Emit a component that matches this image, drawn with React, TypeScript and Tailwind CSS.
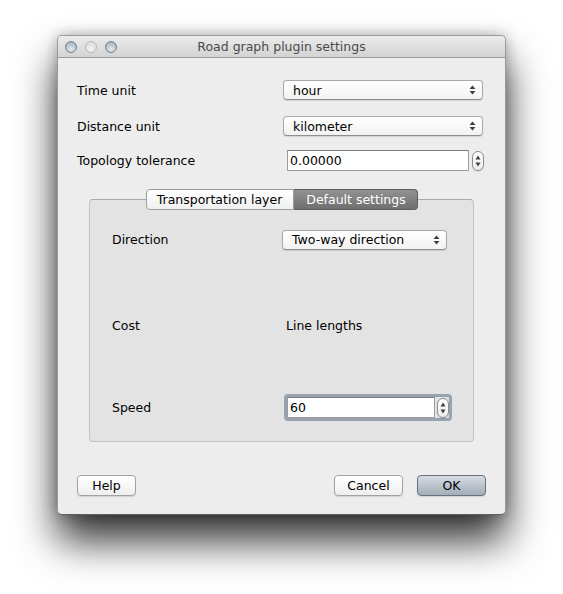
import type { ReactNode } from "react";

const FONT = { fontFamily: '"DejaVu Sans", "Liberation Sans", sans-serif' };

function Arrows() {
  return (
    <svg width="7" height="10" viewBox="0 0 7 10" className="shrink-0">
      <path d="M3.5 0.5 L6.5 4 H0.5 Z" fill="#404040" />
      <path d="M3.5 9.5 L6.5 6 H0.5 Z" fill="#404040" />
    </svg>
  );
}

function Select({ value, width }: { value: string; width: string }) {
  return (
    <div
      className={`${width} h-[20px] flex items-center justify-between pl-[9px] pr-[6px] rounded-[4px] border border-[#a9a9a9] border-b-[#8f8f8f] bg-gradient-to-b from-white to-[#f2f2f2] shadow-[0_1px_1px_rgba(0,0,0,0.12)] text-[12.5px] text-black`}
    >
      <span className="pt-[2px]">{value}</span>
      <Arrows />
    </div>
  );
}

function Spinner() {
  return (
    <div className="w-[12px] h-[20px] rounded-[6px] border border-[#8d8d8d] bg-gradient-to-b from-white to-[#ececec] flex flex-col items-center justify-between py-[3px] shadow-[0_1px_1px_rgba(0,0,0,0.1)]">
      <svg width="6" height="5" viewBox="0 0 6 5">
        <path d="M3 0.5 L5.5 4.5 H0.5 Z" fill="#404040" />
      </svg>
      <svg width="6" height="5" viewBox="0 0 6 5">
        <path d="M3 4.5 L5.5 0.5 H0.5 Z" fill="#404040" />
      </svg>
    </div>
  );
}

function Row({ label, labelW, h, children }: { label: string; labelW: string; h: string; children: ReactNode }) {
  return (
    <div className={`flex items-center ${h}`}>
      <div className={`${labelW} shrink-0 pt-[2px] text-[12.5px] text-black`}>{label}</div>
      {children}
    </div>
  );
}

function Light({ light }: { light?: boolean }) {
  return (
    <div
      className={`w-[12px] h-[12px] rounded-full border ${
        light
          ? "border-[#b4b8bc] bg-[radial-gradient(circle_at_50%_75%,#f4f4f4,#d4d6d8)]"
          : "border-[#77838f] bg-[radial-gradient(circle_at_50%_75%,#e6ecf1,#98a4b0)]"
      }`}
    />
  );
}

function Button({ label, width, primary }: { label: string; width: string; primary?: boolean }) {
  return (
    <div
      className={`${width} h-[21px] flex items-center justify-center rounded-[4px] border text-[12.5px] text-black shadow-[0_1px_1px_rgba(0,0,0,0.12)] ${
        primary
          ? "border-[#6a737d] bg-gradient-to-b from-[#d6dce3] to-[#a3adb8]"
          : "border-[#a2a2a2] bg-gradient-to-b from-white to-[#efefef]"
      }`}
    >
      <span className="pt-[2px]">{label}</span>
    </div>
  );
}

export default function App() {
  return (
    <div className="w-[563px] min-h-[594px] bg-white pt-[35px] pl-[57px]" style={FONT}>
      <div className="w-[449px] h-[480px] flex flex-col rounded-[5px] border border-[#9a9a9a] border-b-[#5f5f5f] bg-[#ededed] shadow-[0_0_14px_rgba(0,0,0,0.28),0_26px_40px_rgba(0,0,0,0.8)] overflow-hidden">
        {/* title bar */}
        <div className="h-[22px] shrink-0 grid grid-cols-[1fr_auto_1fr] items-center border-b border-[#9b9b9b] bg-gradient-to-b from-[#ececec] to-[#d3d3d3]">
          <div className="flex gap-[8px] pl-[7px]">
            <Light />
            <Light light />
            <Light />
          </div>
          <div className="pt-[1px] text-[12.5px] text-[#4a4a4a]">Road graph plugin settings</div>
          <div />
        </div>

        <div className="flex flex-col pl-[19px] pr-[19px] pt-[22px]">
          <Row label="Time unit" labelW="w-[206px]" h="h-[20px]">
            <Select value="hour" width="w-[200px]" />
          </Row>
          <div className="mt-[16px]">
            <Row label="Distance unit" labelW="w-[206px]" h="h-[20px]">
              <Select value="kilometer" width="w-[200px]" />
            </Row>
          </div>
          <div className="mt-[14px]">
            <Row label="Topology tolerance" labelW="w-[210px]" h="h-[21px]">
              <div className="w-[182px] h-[21px] flex items-center pl-[2px] pt-[2px] bg-white border border-[#9c9c9c] border-t-[#7e7e7e] text-[12.5px] text-black">
                0.00000
              </div>
              <div className="ml-[3px]">
                <Spinner />
              </div>
            </Row>
          </div>

          {/* tab widget */}
          <div className="mt-[18px] ml-[12px] w-[385px] flex flex-col">
            <div className="relative z-10 flex justify-center h-[21px]">
              <div className="w-[148px] h-[21px] flex items-center justify-center pt-[2px] rounded-l-[4px] border border-[#9d9d9d] bg-gradient-to-b from-white to-[#f0f0f0] text-[12.5px] text-black">
                Transportation layer
              </div>
              <div className="w-[124px] h-[21px] flex items-center justify-center pt-[2px] pl-[2px] rounded-r-[4px] border border-l-0 border-[#5e5e5e] bg-gradient-to-b from-[#929292] to-[#6f6f6f] text-[12.5px] text-white">
                Default settings
              </div>
            </div>
            <div className="-mt-[11px] h-[243px] rounded-[4px] border border-[#c2c2c2] border-t-[#a9a9a9] bg-[#e3e3e3] pl-[22px] pt-[29px] flex flex-col">
              <Row label="Direction" labelW="w-[170px]" h="h-[21px]">
                <Select value="Two-way direction" width="w-[165px]" />
              </Row>
              <div className="mt-[65px]">
                <Row label="Cost" labelW="w-[174px]" h="h-[20px]">
                  <div className="pt-[2px] text-[12.5px] text-black">Line lengths</div>
                </Row>
              </div>
              <div className="mt-[59px]">
                <Row label="Speed" labelW="w-[172px]" h="h-[27px]">
                  <div className="w-[168px] h-[27px] flex items-center gap-[2px] rounded-[4px] border-[3px] border-[#97a3b0] bg-[#dfe3e7]">
                    <div className="w-[148px] h-[21px] flex items-center pl-[2px] pt-[2px] bg-white border border-[#9c9c9c] border-t-[#7e7e7e] text-[12.5px] text-black">
                      60
                    </div>
                    <Spinner />
                  </div>
                </Row>
              </div>
            </div>
          </div>

          {/* buttons */}
          <div className="mt-[33px] flex items-center">
            <Button label="Help" width="w-[59px]" />
            <div className="flex-1" />
            <Button label="Cancel" width="w-[69px]" />
            <div className="ml-[14px]">
              <Button label="OK" width="w-[69px]" primary />
            </div>
          </div>
        </div>
      </div>
    </div>
  );
}
